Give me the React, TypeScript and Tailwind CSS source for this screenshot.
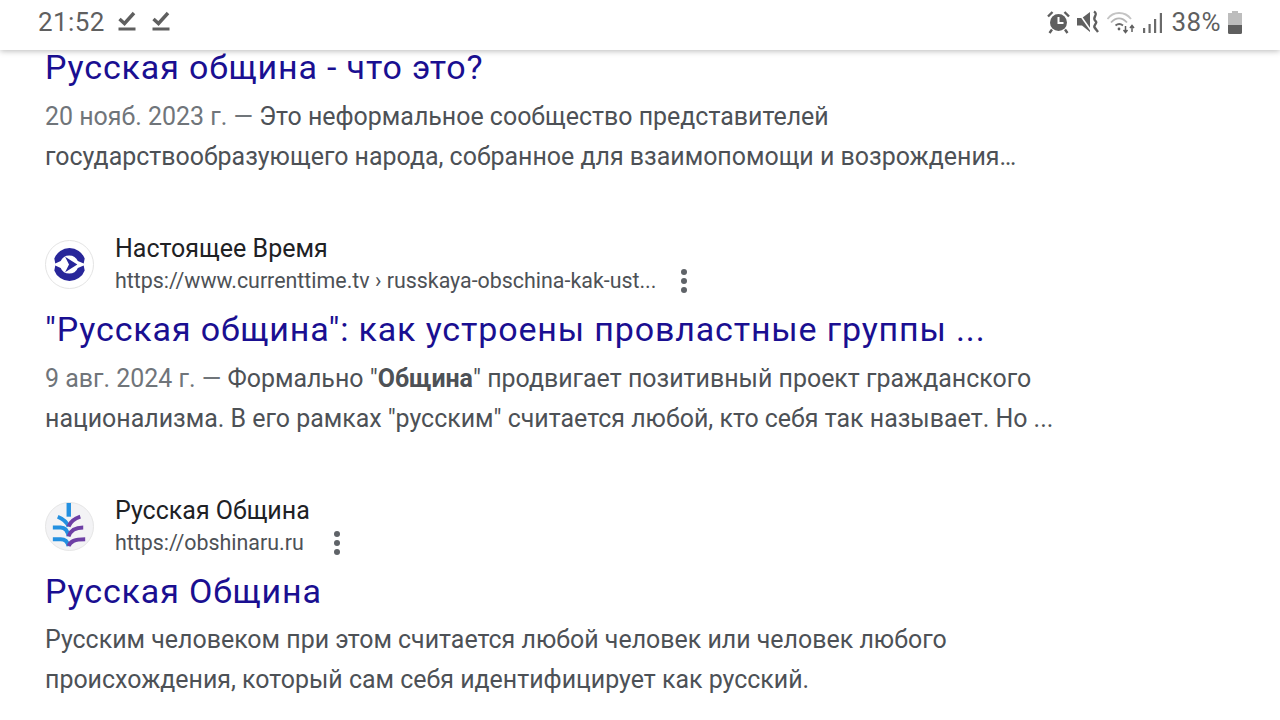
import React from "react";

const font = { fontFamily: "Roboto, 'Noto Sans', sans-serif" };

function Check() {
  return (
    <svg width="18" height="22" viewBox="0 0 18 22" className="block">
      <path d="M1.500 9 L6.500 13.500 L16 3" fill="none" stroke="#5f5f5f" strokeWidth="3.400" />
      <rect x="0.500" y="17.500" width="17" height="3" fill="#5f5f5f" />
    </svg>
  );
}

function StatusIcons() {
  return (
    <div className="flex items-center ml-[-4px]">
      <svg width="23" height="24" viewBox="0 0 23 24" className="block">
        <circle cx="11.500" cy="12.500" r="8.500" fill="#5f5f5f" />
        <path d="M11.500 7V13H16.500" fill="none" stroke="#fff" strokeWidth="2" />
        <path d="M1 6.500 L5.500 2 M22 6.500 L17.500 2 M5 19.500 L2.500 23 M18 19.500 L20.500 23" stroke="#5f5f5f" strokeWidth="2.400" />
      </svg>
      <svg width="23" height="24" viewBox="0 0 23 24" className="block ml-[7px]">
        <path d="M0 8H5L13 2V22L5 15.500H0Z" fill="#5f5f5f" />
        <path d="M1 2 L15 22" stroke="#fff" strokeWidth="1.500" />
        <path d="M17 1.500 C22 4.500 15 7 18 10.500 C22 13 15 15.500 18 18 C19 19.500 20 20.500 21 22" fill="none" stroke="#5f5f5f" strokeWidth="2.400" />
      </svg>
      <svg width="28" height="24" viewBox="0 0 28 24" className="block ml-[7px]">
        <path d="M0.500 9 C6 1 18 1 24 9" fill="none" stroke="#c4c4c4" strokeWidth="1.800" />
        <path d="M4 12.500 C9 7 15 7 20 12.500" fill="none" stroke="#b5b5b5" strokeWidth="1.800" />
        <path d="M8.500 15.500 C11 13.500 13.500 13.500 16 15.500" fill="none" stroke="#6a6a6a" strokeWidth="1.800" />
        <circle cx="12" cy="19" r="1.400" fill="#5f5f5f" />
        <path d="M18.500 16V22M16.500 20L18.500 22.500L20.500 20" fill="none" stroke="#5f5f5f" strokeWidth="1.500" />
        <path d="M25 22V16M23 18L25 15.500L27 18" fill="none" stroke="#5f5f5f" strokeWidth="1.500" />
      </svg>
      <svg width="20" height="24" viewBox="0 0 20 24" className="block ml-[8px]">
        <rect x="0" y="18" width="2.200" height="5" fill="#6a6a6a" />
        <rect x="5.500" y="14" width="2.200" height="9" fill="#6a6a6a" />
        <rect x="11" y="9" width="2.200" height="14" fill="#6a6a6a" />
        <rect x="16.800" y="3" width="2.200" height="20" fill="#6a6a6a" />
      </svg>
    </div>
  );
}

function Battery() {
  return (
    <svg width="14" height="23" viewBox="0 0 14 23" className="block">
      <rect x="4" y="0" width="6" height="3" fill="#bdbdbd" />
      <rect x="0" y="2" width="14" height="12" fill="#bdbdbd" />
      <path d="M0 14H14V21.500Q14 23 12.500 23H1.500Q0 23 0 21.500Z" fill="#5f5f5f" />
    </svg>
  );
}

function More() {
  return (
    <div className="flex flex-col gap-[3px]">
      <span className="block w-[6px] h-[6px] rounded-full bg-[#5f6368]" />
      <span className="block w-[6px] h-[6px] rounded-full bg-[#5f6368]" />
      <span className="block w-[6px] h-[6px] rounded-full bg-[#5f6368]" />
    </div>
  );
}

function LogoTime() {
  return (
    <svg width="49" height="49" viewBox="0 0 50 50" className="block">
      <circle cx="25" cy="25" r="24.500" fill="#fff" stroke="#e2e2e2" />
      <path d="M9.500 19 A16.500 16.500 0 0 1 40.500 19 L39.500 24 L33.500 21.500 A9.500 9.500 0 0 0 16 21.500 L10.500 24 Z" fill="#28269a" />
      <path d="M9.500 31 A16.500 16.500 0 0 0 40.500 31 L39.500 26 L33.500 28.500 A9.500 9.500 0 0 1 16 28.500 L10.500 26 Z" fill="#28269a" />
      <path d="M20.500 17 L33 25 L20.500 33 L24.500 25 Z" fill="#28269a" />
    </svg>
  );
}

function LogoObshina() {
  return (
    <svg width="49" height="49" viewBox="0 0 50 50" className="block">
      <circle cx="25" cy="25" r="24.500" fill="#f3f3f5" stroke="#e4e4e4" />
      <rect x="22" y="1" width="4.500" height="14" fill="#2490e0" />
      <path d="M13 15 C18 17 22 20 24 25" fill="none" stroke="#2490e0" strokeWidth="4" />
      <path d="M24 25 C26 20 30 17 36 15" fill="none" stroke="#6d3fa5" strokeWidth="4" />
      <path d="M8 26 H16 C20 26 23 29 24 35" fill="none" stroke="#2490e0" strokeWidth="4" />
      <path d="M24 35 C26 29 30 26 39 26" fill="none" stroke="#6d3fa5" strokeWidth="4" />
      <path d="M8 38 H16 C20 38 23 40 24 45" fill="none" stroke="#2490e0" strokeWidth="4" />
      <path d="M24 45 C26 40 30 38 41 38" fill="none" stroke="#6d3fa5" strokeWidth="4" />
    </svg>
  );
}

function Header({ logo, name, url, moreClass }: { logo: React.ReactNode; name: string; url: string; moreClass: string }) {
  return (
    <div className="flex items-center h-[66px]">
      {logo}
      <div className="ml-[21px] flex flex-col">
        <div className="text-[25px] leading-[33px] text-[#202124]">{name}</div>
        <div className="flex items-center h-[32px]">
          <span className="text-[21.400px] leading-[32px] text-[#4d5156] whitespace-nowrap">{url}</span>
          <span className={moreClass}><More /></span>
        </div>
      </div>
    </div>
  );
}

function Title({ children }: { children: React.ReactNode }) {
  return <div className="text-[34px] leading-[44px] text-[#1a0f91] tracking-[0.85px] whitespace-nowrap">{children}</div>;
}

function Snippet({ children }: { children: React.ReactNode }) {
  return <div className="text-[24.950px] leading-[39.500px] text-[#4d5156] whitespace-nowrap">{children}</div>;
}

export default function App() {
  return (
    <div style={font} className="w-[1280px] h-[720px] overflow-hidden bg-white relative">
      <div className="h-[50px] bg-white flex items-start justify-between pl-[38px] pr-[38px] shadow-[0_1px_6px_rgba(0,0,0,0.28)] relative z-10">
        <div className="flex items-center h-[44px]">
          <span className="text-[26px] text-[#5f5f5f] tracking-[0.4px]">21:52</span>
          <div className="flex gap-[16px] ml-[13px] mt-[-2px]"><Check /><Check /></div>
        </div>
        <div className="flex items-center h-[44px]">
          <StatusIcons />
          <span className="text-[26px] text-[#5f5f5f] ml-[9px] tracking-[0.4px]">38%</span>
          <span className="ml-[7px]"><Battery /></span>
        </div>
      </div>
      <div className="pl-[45px]">
        <div className="mt-[-5px]"><Title>Русская община - что это?</Title></div>
        <div className="mt-[8px]">
          <Snippet><span className="text-[#70757a]">20 нояб. 2023 г. — </span>Это неформальное сообщество представителей</Snippet>
          <Snippet>государствообразующего народа, собранное для взаимопомощи и возрождения…</Snippet>
        </div>
        <div className="mt-[55px]">
          <Header logo={<LogoTime />} name="Настоящее Время" url="https://www.currenttime.tv › russkaya-obschina-kak-ust..." moreClass="ml-[25px]" />
        </div>
        <div className="mt-[10px]"><Title>"Русская община": как устроены провластные группы ...</Title></div>
        <div className="mt-[8px]">
          <Snippet><span className="text-[#70757a]">9 авг. 2024 г. — </span>Формально "<b>Община</b>" продвигает позитивный проект гражданского</Snippet>
          <Snippet>национализма. В его рамках "русским" считается любой, кто себя так называет. Но ...</Snippet>
        </div>
        <div className="mt-[55px]">
          <Header logo={<LogoObshina />} name="Русская Община" url="https://obshinaru.ru" moreClass="ml-[30px]" />
        </div>
        <div className="mt-[10px]"><Title>Русская Община</Title></div>
        <div className="mt-[7px]">
          <Snippet>Русским человеком при этом считается любой человек или человек любого</Snippet>
          <Snippet>происхождения, который сам себя идентифицирует как русский.</Snippet>
        </div>
      </div>
    </div>
  );
}
